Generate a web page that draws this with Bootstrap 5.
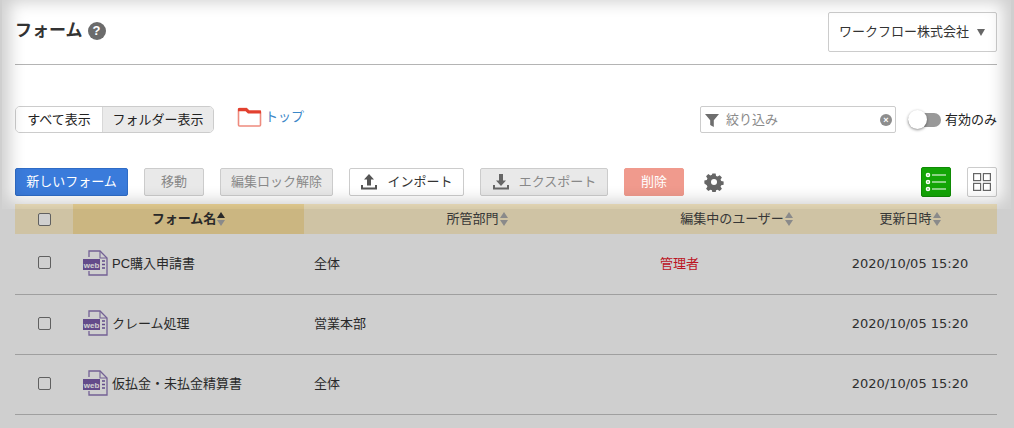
<!DOCTYPE html>
<html lang="ja">
<head>
<meta charset="utf-8">
<title>フォーム</title>
<link rel="stylesheet" href="https://cdn.jsdelivr.net/npm/bootstrap@5.3.0/dist/css/bootstrap.min.css">
<style>
html,body{height:428px;overflow:hidden}
body{background:#fff;font-family:"Liberation Sans","Noto Sans CJK JP",sans-serif;font-size:13px;color:#333;position:relative}
.page-wrap{padding:0 17px 0 15px}
.head-row{height:65px;border-bottom:1px solid #b4b4b4}
.page-title{font-size:17px;font-weight:700;margin:0;color:#333;line-height:26px;padding-top:6px}
.help-dot{width:18px;height:18px;border-radius:50%;background:#6b6b6b;color:#fff;font-size:13px;font-weight:700;line-height:18px;text-align:center;margin-left:5px;margin-top:10px}
.org-select{width:169px;height:40px;margin-top:12px;border:1px solid #ccc;border-radius:2px;padding:0 10px;color:#333;white-space:nowrap}
.caret-down{width:0;height:0;border-left:4px solid transparent;border-right:4px solid transparent;border-top:7px solid #666;margin-left:8px}
.filter-row{height:41px;margin-top:41px}
.view-toggle{border:1px solid #ccc;border-radius:5px;height:27px;width:199px;overflow:hidden}
.view-toggle span{height:25px;line-height:25px;text-align:center;color:#222}
.view-all{width:86px;background:#fff}
.view-folder{width:111px;background:#eaeaea;border-left:1px solid #d8d8d8}
.top-link{color:#3b87c8;text-decoration:none;margin-left:23px;height:22px}
.search-box{width:196px;height:27px;border:1px solid #ccc;border-radius:2px;padding:0 3px 0 3px;color:#8a8a8a;margin-right:12px}
.clear-dot{width:12px;height:12px;border-radius:50%;background:#8d8d8d;color:#fff;font-size:9px;line-height:12px;text-align:center;font-weight:700}
.toggle-rail{width:33px;height:14px;border-radius:7px;background:#999;position:relative;margin-right:4px}
.toggle-knob{position:absolute;left:0;top:-3px;width:19px;height:19px;border-radius:50%;background:#fff;box-shadow:0 1px 3px rgba(0,0,0,.45)}
.tool-row{height:28px;margin-top:21px}
.btn.tool-btn{height:28px;border-radius:2px;font-size:13px;padding:0;border:1px solid #ccc;background:#e9e9e9;color:#888;line-height:26px;margin-right:16px;display:flex;align-items:center;justify-content:center;opacity:1}
.btn.tool-new{width:113px;background:#3a7bdb;border-color:#2f6cc6;color:#fff}
.btn.tool-move{width:60px}
.btn.tool-lock{width:113px}
.btn.tool-imp{width:115px;background:#fff;color:#333}
.btn.tool-exp{width:128px}
.btn.tool-del{width:60px;background:#f09a8d;border-color:#f09a8d;color:#fff;margin-right:20px}
.gear-ic{margin-top:4px}
.btn-ic{margin-right:9px}
.view-sq{width:30px;height:30px;border-radius:2px;border:1px solid #ccc;background:#fff;margin-top:-1px}
.view-list{background:#13a506;border-color:#0f8a05;margin-right:16px}
.form-tbl{table-layout:fixed;width:982px;margin:8px 0 0;--bs-table-bg:transparent;color:#333}
.form-tbl th{height:30px;padding:0;font-weight:400;text-align:center;vertical-align:middle;border:0;color:#444;background:#fff1cb}
.form-tbl th.sorted{background:#fbe19f;font-weight:700;color:#333}
.form-tbl td{height:60px;padding:0 10px;vertical-align:middle;border-bottom:1px solid #c4c4c4;font-size:13px}
.form-tbl .form-check-input{width:13px;height:13px;margin:0;border:1px solid #777;border-radius:2px;display:block}
.form-tbl .chk{padding:0 0 0 23px}
.form-tbl td.chk{padding-bottom:2px}
.doc-ic{margin-top:-2px}
.sort-mark{display:inline-flex;flex-direction:column;gap:2px;vertical-align:middle;margin-left:1px;margin-top:-2px}
.sort-mark i{display:block;width:0;height:0;border-left:4px solid transparent;border-right:4px solid transparent}
.sort-up{border-bottom:6px solid #aaa}
.sort-dn{border-top:6px solid #aaa}
.sort-up.on{border-bottom-color:#333}
.admin-name{color:#e8192c}
.form-tbl td.date-cell{font-family:"DejaVu Sans",sans-serif;font-size:13px;text-align:center;padding:0;color:#3a3a3a}
.spot{position:absolute;left:2px;top:-6px;width:1009px;height:215px;box-shadow:0 0 0 1500px rgba(0,0,0,.19),inset 0 0 16px 8px rgba(0,0,0,.19);pointer-events:none}
</style>
</head>
<body>
<div class="page-wrap">
  <div class="head-row d-flex justify-content-between align-items-start">
    <div class="d-flex align-items-start" style="padding-top:12px">
      <h1 class="page-title">フォーム</h1><span class="help-dot">?</span>
    </div>
    <div class="org-select d-flex align-items-center"><span>ワークフロー株式会社</span><span class="caret-down"></span></div>
  </div>
  <div class="filter-row d-flex align-items-start">
    <div class="view-toggle d-flex"><span class="view-all">すべて表示</span><span class="view-folder">フォルダー表示</span></div>
    <a class="top-link d-flex align-items-center" href="#">
      <svg width="25" height="22" viewBox="0 0 25 22"><path d="M1.500 3.500a1 1 0 0 1 1-1h7l2.500 2.500h10.500a1 1 0 0 1 1 1v13a1 1 0 0 1-1 1h-20a1 1 0 0 1-1-1z" fill="#fff" stroke="#ee8b7e" stroke-width="1.600"/><path d="M1 3a1 1 0 0 1 1-1h7.600l2.600 2.600h11.800v3h-13l-2.400-2.400h-7.600z" fill="#e2402f"/></svg>
      <span style="margin-left:3px">トップ</span>
    </a>
    <div class="ms-auto search-box d-flex align-items-center">
      <svg width="16" height="16" viewBox="0 0 16 16"><path d="M1 2h14L9.800 8.200V15L6.200 13V8.200z" fill="#6e6e6e"/></svg>
      <span class="flex-grow-1" style="margin-left:6px">絞り込み</span>
      <span class="clear-dot">×</span>
    </div>
    <div class="d-flex align-items-center" style="height:27px"><span class="toggle-rail"><span class="toggle-knob"></span></span><span style="color:#222">有効のみ</span></div>
  </div>
  <div class="tool-row d-flex">
    <button class="btn tool-btn tool-new">新しいフォーム</button>
    <button class="btn tool-btn tool-move" disabled>移動</button>
    <button class="btn tool-btn tool-lock" disabled>編集ロック解除</button>
    <button class="btn tool-btn tool-imp">
      <svg width="18" height="18" viewBox="0 0 18 18" class="btn-ic"><path d="M9 1l5 5.500h-3v6H7v-6H4z" fill="#555"/><path d="M1 12v4.500h16V12h-2v2.500H3V12z" fill="#555"/></svg><span>インポート</span>
    </button>
    <button class="btn tool-btn tool-exp" disabled>
      <svg width="18" height="18" viewBox="0 0 18 18" class="btn-ic"><path d="M7 1h4v6.500h3L9 13 4 7.500h3z" fill="#666"/><path d="M1 12v4.500h16V12h-2v2.500H3V12z" fill="#666"/></svg><span>エクスポート</span>
    </button>
    <button class="btn tool-btn tool-del" disabled>削除</button>
    <svg width="20" height="20" viewBox="0 0 20 20" class="gear-ic"><path d="M8.200 0.500h3.600l.5 2.700 1.700.7 2.300-1.500 2.500 2.500-1.500 2.300.7 1.700 2.700.5v3.600l-2.700.5-.7 1.700 1.500 2.300-2.500 2.500-2.300-1.500-1.700.7-.5 2.700H8.200l-.5-2.700-1.700-.7-2.300 1.500-2.500-2.500 1.500-2.300-.7-1.700L-.7 11.800V8.200l2.700-.5.700-1.700-1.500-2.300 2.500-2.500 2.300 1.500 1.700-.7z" transform="translate(1 1) scale(.9)" fill="#666"/><circle cx="10" cy="10" r="3" fill="#fff"/></svg>
    <div class="ms-auto d-flex">
      <div class="view-sq view-list d-flex align-items-center justify-content-center">
        <svg width="22" height="22" viewBox="0 0 22 22"><g stroke="#fff" fill="none"><circle cx="3" cy="4" r="1.500" stroke-width="1.600"/><circle cx="3" cy="11" r="1.500" stroke-width="1.600"/><circle cx="3" cy="18" r="1.500" stroke-width="1.600"/><path d="M7 4h14M7 11h14M7 18h14" stroke-width="1.200"/></g></svg>
      </div>
      <div class="view-sq d-flex align-items-center justify-content-center">
        <svg width="18" height="18" viewBox="0 0 18 18"><g fill="none" stroke="#666" stroke-width="1.200"><rect x=".6" y=".6" width="7" height="7"/><rect x="10.400" y=".6" width="7" height="7"/><rect x=".6" y="10.400" width="7" height="7"/><rect x="10.400" y="10.400" width="7" height="7"/></g></svg>
      </div>
    </div>
  </div>
  <table class="table form-tbl">
    <colgroup><col style="width:58px"><col style="width:231px"><col style="width:346px"><col style="width:173px"><col style="width:174px"></colgroup>
    <thead><tr>
      <th class="chk"><input class="form-check-input" type="checkbox"></th>
      <th class="sorted">フォーム名<span class="sort-mark"><i class="sort-up on"></i><i class="sort-dn"></i></span></th>
      <th>所管部門<span class="sort-mark"><i class="sort-up"></i><i class="sort-dn"></i></span></th>
      <th>編集中のユーザー<span class="sort-mark"><i class="sort-up"></i><i class="sort-dn"></i></span></th>
      <th>更新日時<span class="sort-mark"><i class="sort-up"></i><i class="sort-dn"></i></span></th>
    </tr></thead>
    <tbody>
      <tr><td class="chk"><input class="form-check-input" type="checkbox"></td><td><div class="d-flex align-items-center"><svg class="doc-ic" width="25" height="26" viewBox="0 0 25 26"><use href="#webdoc"/></svg><span class="ms-1">PC購入申請書</span></div></td><td>全体</td><td class="admin-name">管理者</td><td class="date-cell">2020/10/05 15:20</td></tr>
      <tr><td class="chk"><input class="form-check-input" type="checkbox"></td><td><div class="d-flex align-items-center"><svg class="doc-ic" width="25" height="26" viewBox="0 0 25 26"><use href="#webdoc"/></svg><span class="ms-1">クレーム処理</span></div></td><td>営業本部</td><td></td><td class="date-cell">2020/10/05 15:20</td></tr>
      <tr><td class="chk"><input class="form-check-input" type="checkbox"></td><td><div class="d-flex align-items-center"><svg class="doc-ic" width="25" height="26" viewBox="0 0 25 26"><use href="#webdoc"/></svg><span class="ms-1">仮払金・未払金精算書</span></div></td><td>全体</td><td></td><td class="date-cell">2020/10/05 15:20</td></tr>
    </tbody>
  </table>
</div>
<svg width="0" height="0" class="position-absolute"><defs><g id="webdoc">
  <path d="M6 7V1h11l7 7v17H6v-4" fill="none" stroke="#8f78b8" stroke-width="1.300"/>
  <path d="M17 1v7h7" fill="none" stroke="#8f78b8" stroke-width="1.100"/>
  <rect x="0" y="9" width="17" height="11" fill="#7a5dab"/>
  <text x="8.500" y="17.500" text-anchor="middle" font-family="Liberation Sans" font-size="8" font-weight="700" fill="#fff">web</text>
  <path d="M19 11h3M19 14.500h3M19 18h3" stroke="#7a5dab" stroke-width="1.500"/>
</g></defs></svg>
<div class="spot"></div>
</body>
</html>
